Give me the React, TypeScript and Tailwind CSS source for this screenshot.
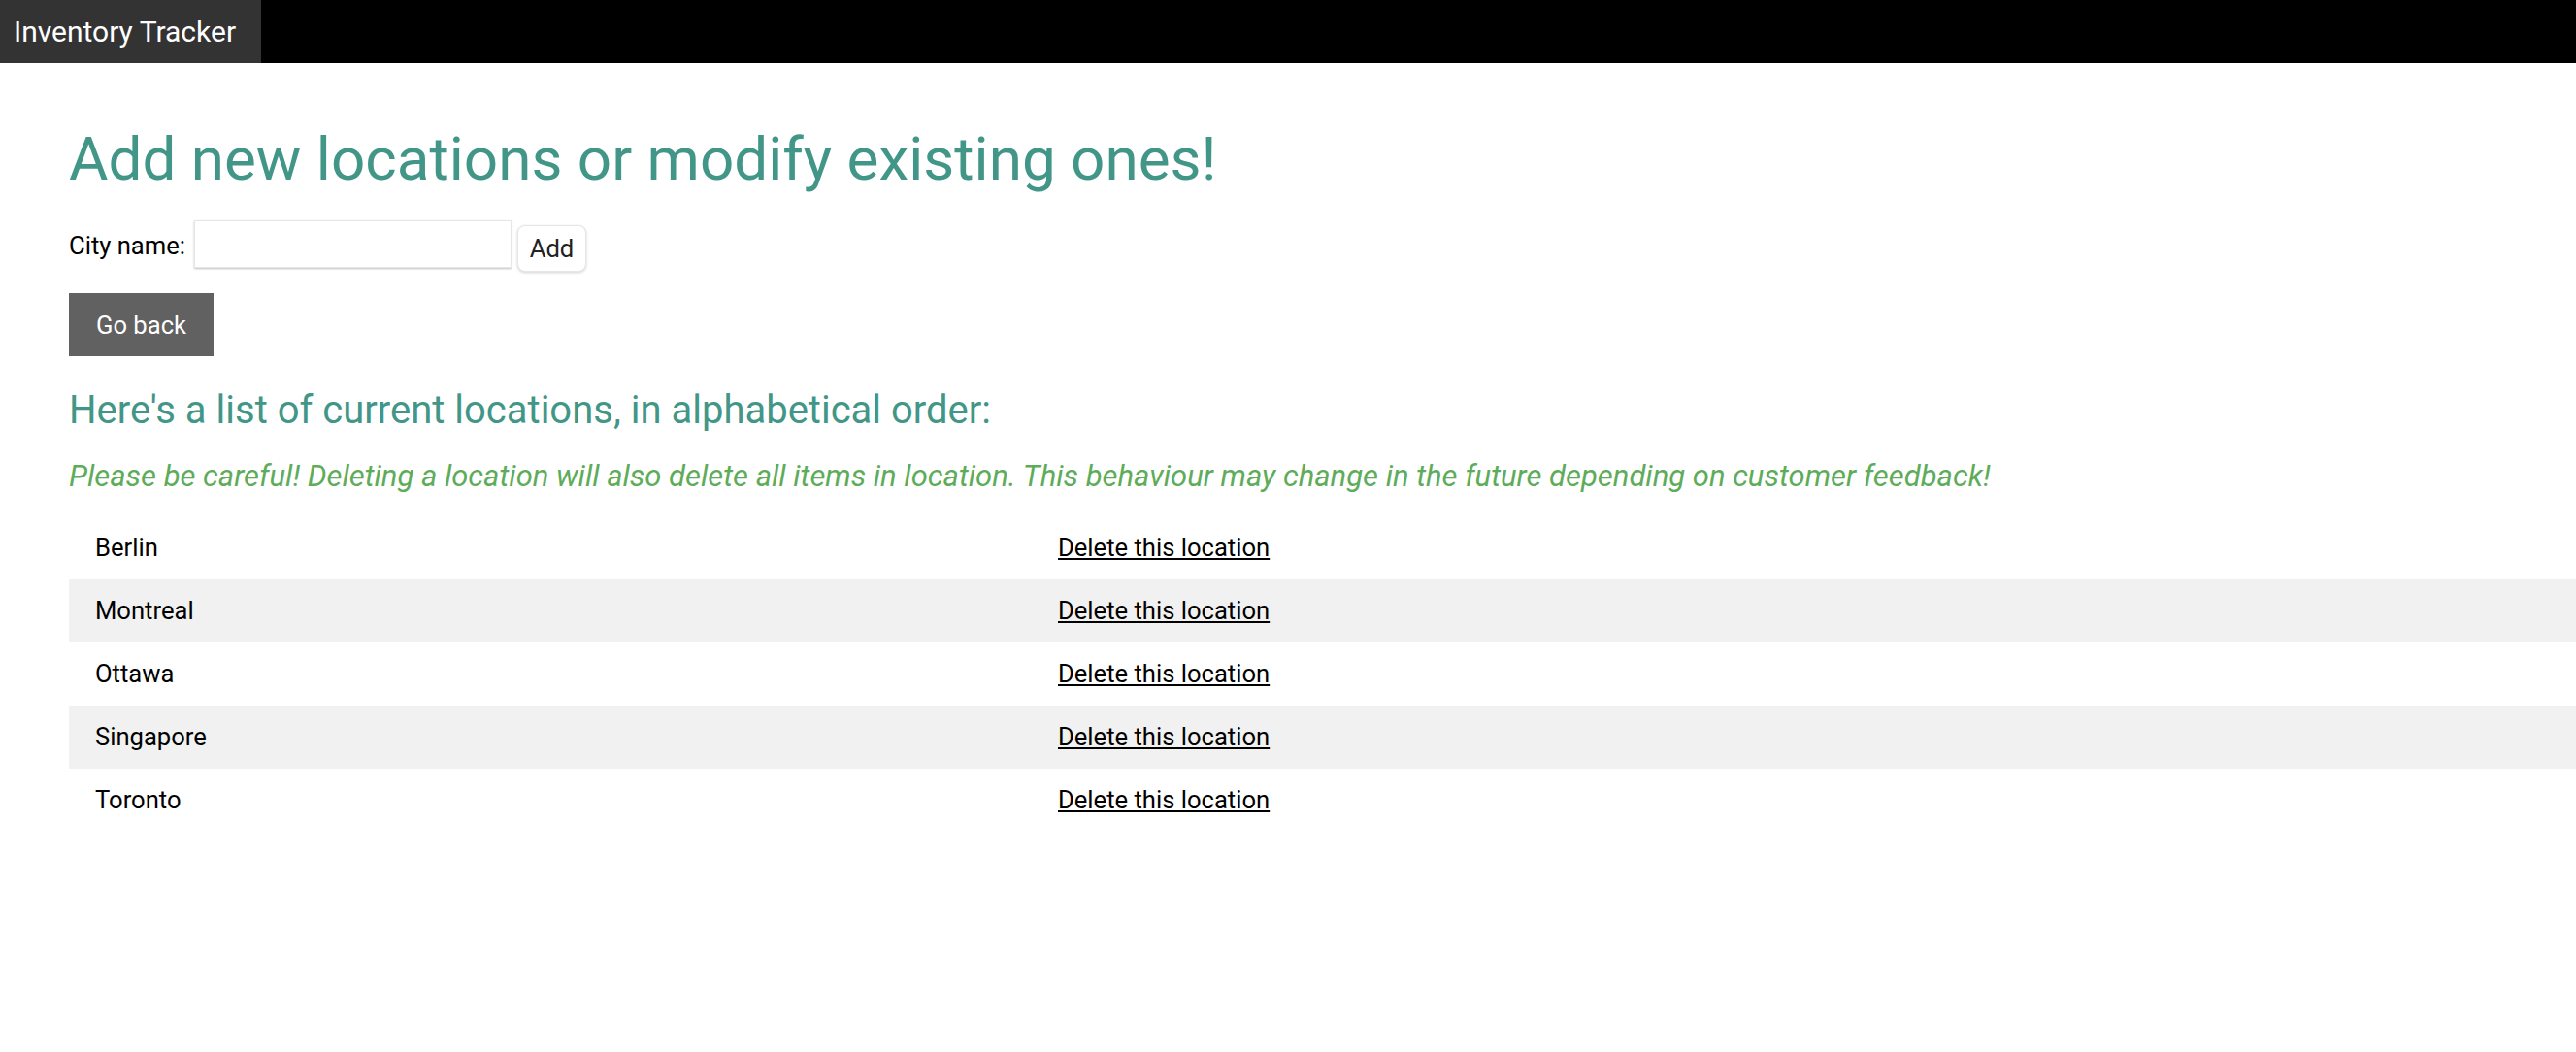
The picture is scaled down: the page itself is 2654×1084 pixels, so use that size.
const locations = ["Berlin", "Montreal", "Ottawa", "Singapore", "Toronto"];

const App = () => {
  return (
    <div className="min-h-screen bg-white font-['Roboto',sans-serif] text-[25.6px] text-black">
      <div className="flex h-[65px] w-full bg-black">
        <div className="flex w-[269px] items-center bg-[#333] px-[14px] text-[30px] text-white">
          Inventory Tracker
        </div>
      </div>
      <div className="pl-[71px] pt-[62px]">
        <h1 className="text-[62px] leading-[1.2] text-[#429687]">
          Add new locations or modify existing ones!
        </h1>
        <div className="mt-[26px] flex items-start">
          <label className="mt-[7px] leading-[38px]">City name:</label>
          <input
            type="text"
            className="ml-[9px] h-[49px] w-[327px] border border-[#e6e6e6] bg-white shadow-[0_1px_2px_rgba(0,0,0,0.25)] outline-none"
          />
          <button className="ml-[6px] mt-[5px] h-[48px] w-[71px] rounded-[8px] border border-[#e6e6e6] bg-white text-[25.6px] text-[#222] shadow-[0_1px_3px_rgba(0,0,0,0.18)]">
            Add
          </button>
        </div>
        <button className="mt-[22px] h-[65px] w-[149px] bg-[#616161] text-[25.6px] text-white">
          Go back
        </button>
        <h3 className="mt-[32px] text-[40px] leading-[1.2] text-[#429687]">
          Here's a list of current locations, in alphabetical order:
        </h3>
        <p className="mt-[21px] text-[31px] italic leading-[1.5] text-[#5eac5a]">
          Please be careful! Deleting a location will also delete all items in
          location. This behaviour may change in the future depending on
          customer feedback!
        </p>
        <div className="mt-[17px] w-full">
          {locations.map((city, i) => (
            <div
              key={city}
              className={`grid h-[65px] grid-cols-[1005px_1fr] items-center leading-[38px] ${
                i % 2 === 1 ? "bg-[#f1f1f1]" : "bg-white"
              }`}
            >
              <div className="pl-[27px]">{city}</div>
              <div className="pl-[14px]">
                <a href="#" className="underline">
                  Delete this location
                </a>
              </div>
            </div>
          ))}
        </div>
      </div>
    </div>
  );
};

export default App;
